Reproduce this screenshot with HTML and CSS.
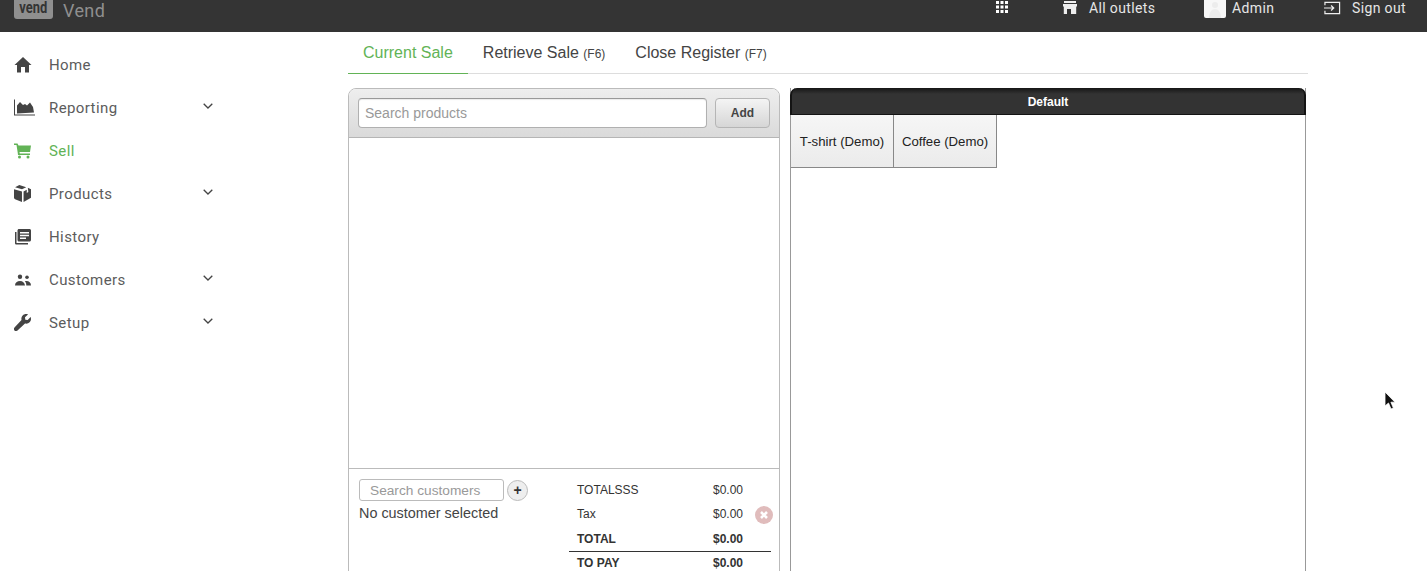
FILE: index.html
```html
<!DOCTYPE html>
<html lang="en">
<head>
  <meta charset="UTF-8">
  <meta name="viewport" content="width=device-width, initial-scale=1.0">
  <title>Vend</title>
  <link rel="stylesheet" href="styles.css">
</head>
<body>
<header class="topbar">
  <div class="brand">
    <span class="logo"><span class="logo-text">vend</span></span>
    <span class="brand-name">Vend</span>
  </div>
  <nav class="top-links">
    <svg class="top-apps" viewBox="0 0 12 12" width="12" height="12" fill="#fff">
      <rect x="0" y="0" width="3" height="3"/><rect x="4.5" y="0" width="3" height="3"/><rect x="9" y="0" width="3" height="3"/>
      <rect x="0" y="4.5" width="3" height="3"/><rect x="4.5" y="4.5" width="3" height="3"/><rect x="9" y="4.5" width="3" height="3"/>
      <rect x="0" y="9" width="3" height="3"/><rect x="4.5" y="9" width="3" height="3"/><rect x="9" y="9" width="3" height="3"/>
    </svg>
    <a class="top-link top-outlets">
      <svg viewBox="0 0 14 13" width="14" height="13" fill="#eee"><path d="M1 0h12v2H1zM0 3h14v2.500h-.8V13H8V8H4v5H.8V5.500H0z"/></svg>
      <span>All outlets</span>
    </a>
    <a class="top-link top-admin">
      <span class="avatar">
        <svg viewBox="0 0 22 18" width="22" height="18" fill="#ececec"><circle cx="11" cy="5" r="3"/><path d="M5 18c0-6 3-9 6-9s6 3 6 9z"/></svg>
      </span>
      <span>Admin</span>
    </a>
    <a class="top-link top-signout">
      <svg viewBox="0 0 18 14" width="17" height="14" fill="none" stroke="#eee" stroke-width="1.300"><path d="M1 4V1h15.500v12H1v-3M0 7h10M7.500 4.300 10.300 7l-2.800 2.700"/></svg>
      <span>Sign out</span>
    </a>
  </nav>
</header>

<div class="layout">
  <aside class="sidebar">
    <a class="nav-item">
      <svg class="nav-icon" viewBox="0 0 18 16"><path d="M9 0 17.500 8H15v7.500h-4V10H7v5.500H3V8H.500z"/></svg>
      <span class="nav-label">Home</span>
    </a>
    <a class="nav-item">
      <svg class="nav-icon nav-icon-wide" viewBox="0 0 21 16"><path d="M0 0h1v15h20v1H0z"/><path d="M3 14V6l3-3.500 3 3 2-1 2 1.500 3-3 3 4.500 1 5.500z"/></svg>
      <span class="nav-label">Reporting</span>
      <svg class="chevron" viewBox="0 0 10 6"><path d="M.7.700 5 5 9.300.700"/></svg>
    </a>
    <a class="nav-item nav-active">
      <svg class="nav-icon" viewBox="0 0 18 15"><path d="M0 0h3.500l1 2H17l-1 6.500H5.500L5.800 10H16v1.500H4L3.700 9 2.500 1.500H0z"/><circle cx="5.500" cy="13.500" r="1.500"/><circle cx="14" cy="13.500" r="1.500"/></svg>
      <span class="nav-label">Sell</span>
    </a>
    <a class="nav-item">
      <svg class="nav-icon nav-icon-tool" viewBox="0 0 16 16"><path d="M5 0 11.500 2 7.500 4 1 2zM13 2.500 16 4v8l-7 4V6l3-1.500v3l1.500-1zM0 4l7.500 2v10L1 13.500C.3 13 0 12.500 0 12z"/></svg>
      <span class="nav-label">Products</span>
      <svg class="chevron" viewBox="0 0 10 6"><path d="M.7.700 5 5 9.300.700"/></svg>
    </a>
    <a class="nav-item">
      <svg class="nav-icon nav-icon-sm" viewBox="0 0 16 16"><path d="M0 3h1.500v11H13v1.500H1.500C.6 15.500 0 15 0 14z"/><path fill-rule="evenodd" d="M4 0h10.500c.8 0 1.500.7 1.500 1.500V11c0 .8-.7 1.500-1.500 1.500H4c-.8 0-1.500-.7-1.500-1.500V1.500C2.500.7 3.200 0 4 0zM5 3v1.500h9V3zM5 5.800v1.500h9V5.800zM5 8.500V10h6V8.500z"/></svg>
      <span class="nav-label">History</span>
    </a>
    <a class="nav-item">
      <svg class="nav-icon nav-icon-sm" viewBox="0 0 16 11"><circle cx="5" cy="2.200" r="2.200"/><circle cx="12" cy="2.700" r="1.800"/><path d="M0 11c0-3 2.200-4.500 5-4.500S9.500 8 10 11zM11.300 11c0-2-.5-3.200-1.500-4.200 3-1 6.200.6 6.200 4.200z"/></svg>
      <span class="nav-label">Customers</span>
      <svg class="chevron" viewBox="0 0 10 6"><path d="M.7.700 5 5 9.300.700"/></svg>
    </a>
    <a class="nav-item">
      <svg class="nav-icon nav-icon-tool" viewBox="0 0 17 17"><path d="M12 0c1 0 1.500.1 2 .4L11 3.300l.3 2.400 2.400.3L16.600 3c.3.500.4 1 .4 2 0 3-2.800 5.300-6 4.500L3.500 16.500c-1 .8-2.200.7-3-.1s-.8-2 0-3L7.500 6C6.800 3 9 0 12 0z"/></svg>
      <span class="nav-label">Setup</span>
      <svg class="chevron" viewBox="0 0 10 6"><path d="M.7.700 5 5 9.300.700"/></svg>
    </a>
  </aside>

  <main class="content">
    <div class="tabs">
      <a class="tab tab-active">Current Sale</a>
      <a class="tab">Retrieve Sale <small>(F6)</small></a>
      <a class="tab">Close Register <small>(F7)</small></a>
    </div>

    <div class="register">
      <section class="sale-panel">
        <div class="sale-search">
          <input class="product-input" type="text" placeholder="Search products">
          <button class="add-btn" type="button">Add</button>
        </div>
        <div class="sale-lines"></div>
        <div class="sale-footer">
          <div class="customer">
            <div class="customer-row">
              <input class="customer-input" type="text" placeholder="Search customers">
              <span class="customer-add">+</span>
            </div>
            <p class="customer-none">No customer selected</p>
          </div>
          <div class="totals">
            <div class="total-row"><span>TOTALSSS</span><span>$0.00</span></div>
            <div class="total-row"><span>Tax</span><span>$0.00</span></div>
            <div class="total-row total-bold"><span>TOTAL</span><span>$0.00</span></div>
            <div class="total-row total-bold total-pay"><span>TO PAY</span><span>$0.00</span></div>
            <span class="void-btn">
              <svg viewBox="0 0 18 18" width="18" height="18"><circle cx="9" cy="9" r="9" fill="#e0bcbc"/><path d="M6 6l6 6M12 6l-6 6" stroke="#fff" stroke-width="2.600"/></svg>
            </span>
          </div>
        </div>
      </section>

      <section class="quick-panel">
        <div class="quick-title">Default</div>
        <div class="quick-items">
          <a class="quick-item">T-shirt (Demo)</a>
          <a class="quick-item">Coffee (Demo)</a>
        </div>
      </section>
    </div>
  </main>
</div>

<svg class="cursor" viewBox="0 0 12 20" width="12" height="20">
  <path d="M1 1v14l3.500-3 2.500 6 2.400-1-2.500-5.800H11z" fill="#111" stroke="#fff" stroke-width=".8"/>
</svg>
</body>
</html>
```

FILE: styles.css
```css
* {
  box-sizing: border-box;
}

html, body {
  height: 571px;
  overflow: hidden;
}

body {
  margin: 0;
  position: relative;
  background-color: #fff;
  font-family: "Liberation Sans", Arial, sans-serif;
  color: #333;
}

/* top bar */
.topbar {
  height: 32px;
  background-color: #343434;
  display: flex;
  justify-content: space-between;
  overflow: hidden;
  font-family: Roboto, sans-serif;
  font-size: 14px;
  letter-spacing: 0.36px;
}

.brand {
  display: flex;
  align-items: flex-start;
  padding-left: 14px;
}

.logo {
  width: 39px;
  height: 19px;
  border-radius: 0 0 3px 3px;
  background-color: #8f8f8f;
  color: #343434;
  font-size: 15px;
  font-weight: bold;
  line-height: 15px;
  letter-spacing: 0;
  text-align: center;
}

.logo-text {
  display: inline-block;
  transform: scale(0.86, 1.15);
}

.brand-name {
  margin-left: 10px;
  color: #8f8f8f;
  font-size: 18px;
  line-height: 21px;
}

.top-links {
  display: flex;
  align-items: flex-start;
  color: #e6e6e6;
  line-height: 16px;
}

.top-apps {
  margin-top: 1px;
  margin-right: 55px;
}

.top-link {
  display: flex;
  align-items: flex-start;
}

.top-outlets {
  width: 141px;
  gap: 12px;
}

.top-outlets svg {
  margin-top: 1px;
}

.top-admin {
  width: 120px;
  gap: 6px;
}

.avatar {
  width: 22px;
  height: 18px;
  border-radius: 0 0 2px 2px;
  background-color: #f7f7f7;
  display: block;
}

.top-signout {
  width: 103px;
  gap: 11px;
}

.top-signout svg {
  margin-top: 1px;
}

/* page */
.layout {
  display: flex;
}

.sidebar {
  width: 348px;
  padding-top: 11px;
  font-family: Roboto, sans-serif;
  font-size: 15px;
  letter-spacing: 0.4px;
}

.nav-item {
  width: 230px;
  height: 43px;
  padding-left: 14px;
  display: flex;
  align-items: center;
  color: #5c5c5c;
  position: relative;
}

.nav-icon {
  width: 18px;
  height: 18px;
  fill: #444;
}

.nav-icon-wide {
  width: 21px;
  height: 17px;
}

.nav-icon-sm {
  width: 16px;
  height: 16px;
  margin-left: 1px;
}

.nav-icon-tool {
  width: 17px;
  height: 17px;
}

.nav-label {
  position: absolute;
  left: 49px;
}

.chevron {
  position: absolute;
  left: 203px;
  top: 17px;
  width: 10px;
  height: 6px;
  fill: none;
  stroke: #444;
  stroke-width: 1.300;
}

.nav-active {
  color: #62b356;
}

.nav-active .nav-icon {
  fill: #62b356;
}

.content {
  width: 960px;
}

.tabs {
  height: 42px;
  display: flex;
  border-bottom: 1px solid #ddd;
}

.tab {
  height: 42px;
  padding: 12px 15px 0;
  font-size: 16px;
  line-height: 18px;
  color: #444;
}

.tab small {
  font-size: 12px;
}

.tab-active {
  color: #62b356;
  border-bottom: 1px solid #62b356;
}

.register {
  display: flex;
  gap: 10px;
  margin-top: 14px;
}

/* sale panel */
.sale-panel {
  width: 432px;
  height: 520px;
  border: 1px solid #bbb;
  border-radius: 8px 8px 0 0;
}

.sale-search {
  height: 49px;
  padding: 9px 9px 0;
  display: flex;
  justify-content: space-between;
  background: linear-gradient(#eee, #dadada);
  border-bottom: 1px solid #b5b5b5;
  border-radius: 7px 7px 0 0;
}

.product-input {
  width: 349px;
  height: 30px;
  padding: 0 6px;
  border: 1px solid #b0b0b0;
  border-top-color: #999;
  border-radius: 4px;
  background-color: #fff;
  box-shadow: inset 0 1px 1px rgba(0, 0, 0, 0.08);
  font-family: inherit;
  font-size: 14px;
}

.product-input::placeholder,
.customer-input::placeholder {
  color: #999;
  opacity: 1;
}

.add-btn {
  width: 55px;
  height: 30px;
  padding: 0;
  border: 1px solid #b5b5b5;
  border-radius: 4px;
  background: linear-gradient(#f4f4f4, #d6d6d6);
  font-family: inherit;
  font-size: 12px;
  font-weight: bold;
  color: #444;
}

.sale-lines {
  height: 331px;
  border-bottom: 1px solid #bbb;
}

.sale-footer {
  display: flex;
  padding: 10px 8px 0 10px;
}

.customer {
  width: 210px;
  font-size: 14.4px;
  color: #444;
}

.customer-row {
  display: flex;
  align-items: center;
  gap: 3px;
}

.customer-input {
  width: 145px;
  height: 22px;
  padding: 0 10px;
  border: 1px solid #bbb;
  border-radius: 3px;
  font-family: inherit;
  font-size: 13.7px;
}

.customer-add {
  width: 21px;
  height: 21px;
  border: 1px solid #bbb;
  border-radius: 50%;
  background-color: #eee;
  font-size: 14px;
  font-weight: bold;
  line-height: 18px;
  text-align: center;
  color: #333;
}

.customer-none {
  margin: 4px 0 0;
  line-height: 17px;
}

.totals {
  width: 202px;
  position: relative;
  font-size: 12px;
  color: #333;
}

.total-row {
  width: 202px;
  height: 24px;
  padding: 0 28px 0 8px;
  display: flex;
  justify-content: space-between;
  line-height: 22px;
}

.total-bold {
  padding-top: 1px;
  font-weight: bold;
}

.total-pay {
  padding-top: 0;
  border-top: 1px solid #333;
}

.void-btn {
  position: absolute;
  left: 186px;
  top: 27px;
}

/* quick keys */
.quick-panel {
  width: 516px;
  height: 520px;
  border: 1px solid #999;
  border-top: none;
}

.quick-title {
  height: 27px;
  margin: 0 -1px;
  background: linear-gradient(#161616, #333 6px);
  border: 2px solid #141414;
  border-top: none;
  border-bottom-width: 1px;
  border-radius: 7px 7px 0 0;
  font-size: 12px;
  font-weight: bold;
  line-height: 28px;
  text-align: center;
  color: #fff;
}

.quick-items {
  display: flex;
}

.quick-item {
  width: 103px;
  height: 53px;
  border-right: 1px solid #888;
  border-bottom: 1px solid #888;
  background: linear-gradient(#f6f6f6, #ebebeb);
  font-size: 13.2px;
  line-height: 54px;
  text-align: center;
  color: #222;
}

.cursor {
  position: absolute;
  left: 1384px;
  top: 391px;
}
```
